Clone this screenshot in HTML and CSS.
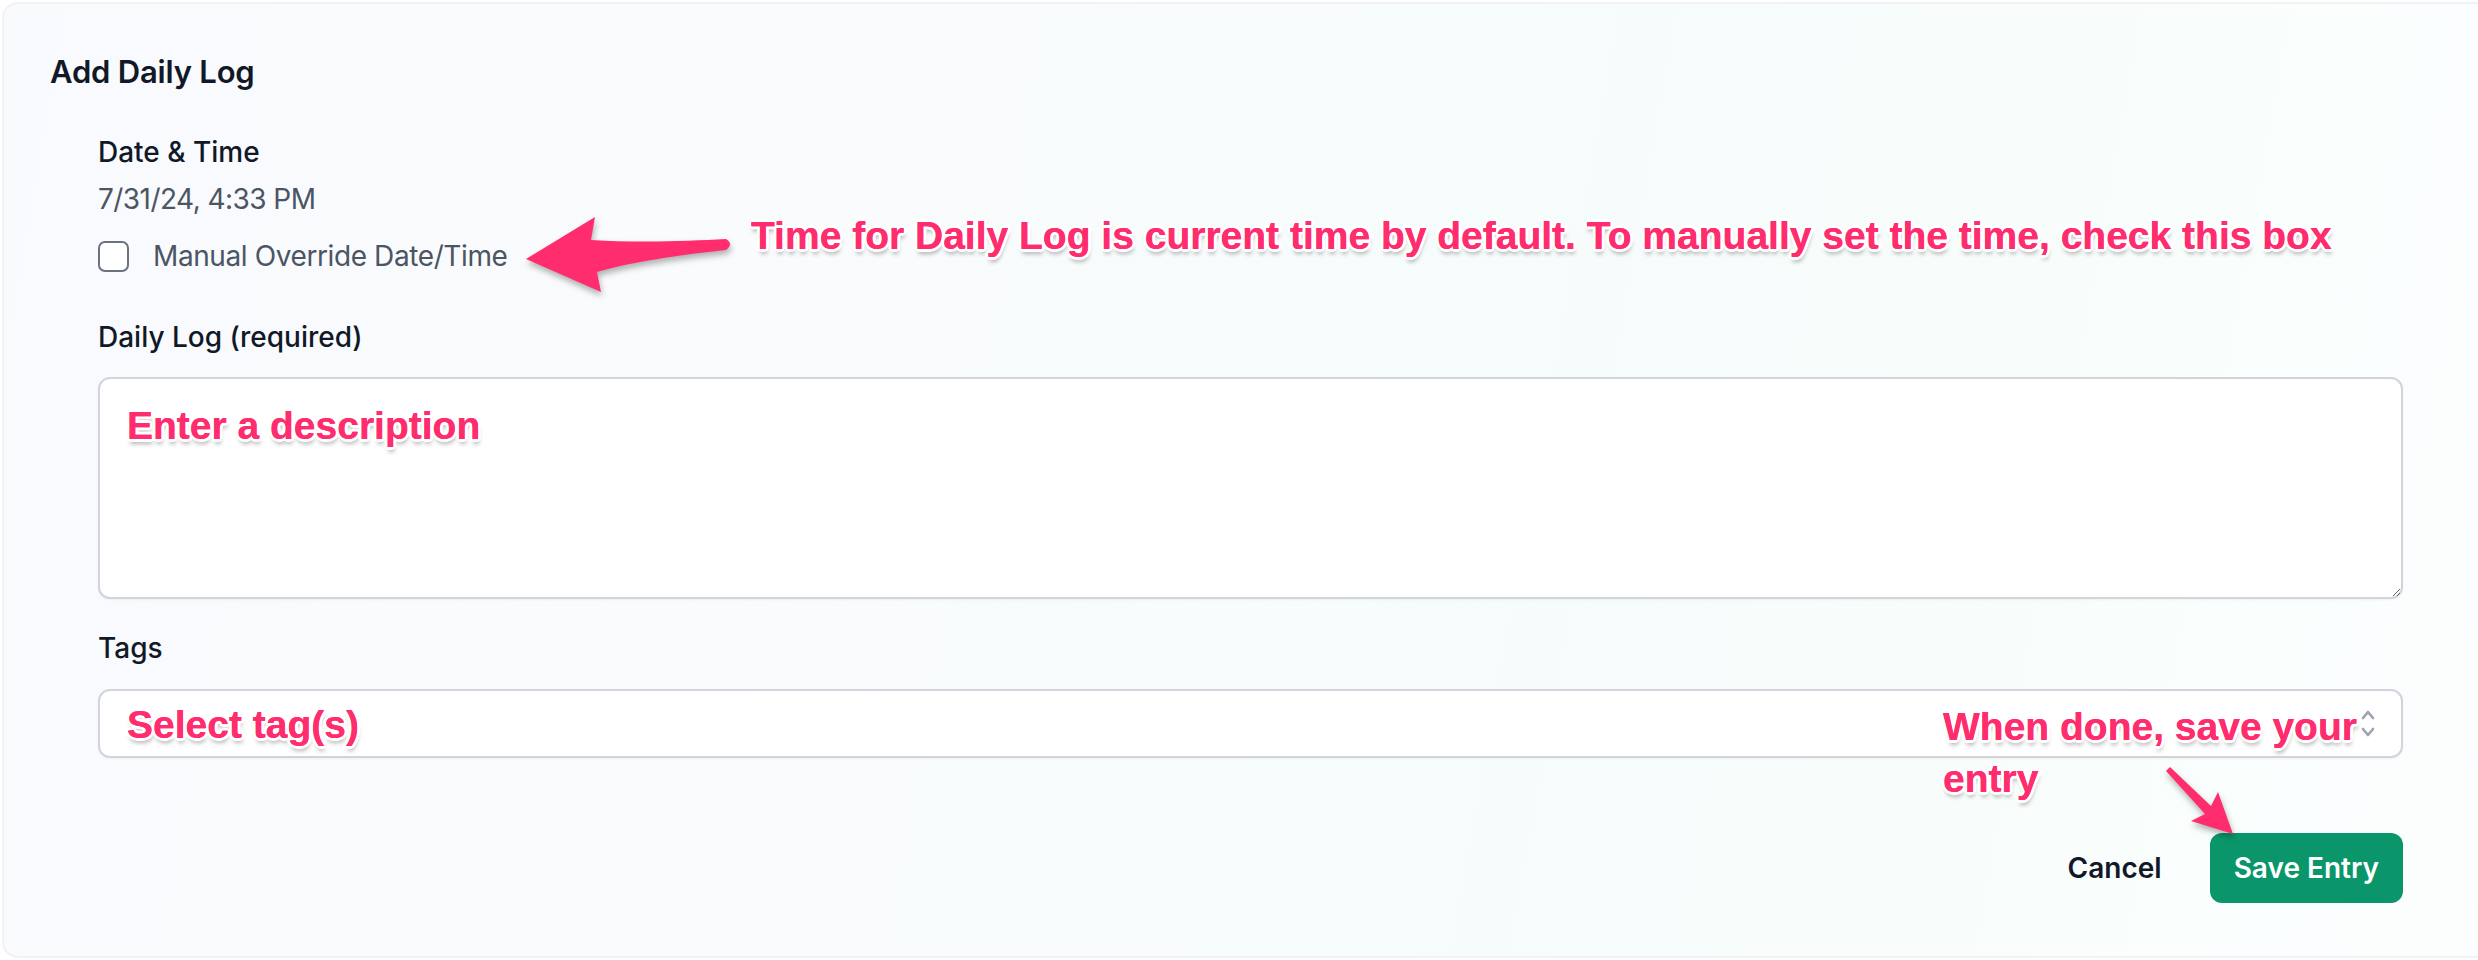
FILE: index.html
```html
<!DOCTYPE html>
<html lang="en">
<head>
<meta charset="utf-8">
<title>Add Daily Log</title>
<link rel="stylesheet" href="styles.css">
</head>
<body>
<div class="card">
  <h2 class="title">Add Daily Log</h2>
  <div class="form">
    <div class="label">Date &amp; Time</div>
    <div class="datetime">7/31/24, 4:33 PM</div>
    <label class="check-row">
      <span class="checkbox"></span>
      <span class="check-text">Manual Override Date/Time</span>
    </label>

    <div class="label label-gap">Daily Log (required)</div>
    <div class="field-wrap">
      <textarea class="textarea"></textarea>
      <div class="note note-field note-desc">Enter a description</div>
    </div>

    <div class="label label-tags">Tags</div>
    <div class="field-wrap">
      <div class="select">
        <svg class="chevron" width="16" height="30" viewBox="0 0 16 30">
          <polyline points="3,9 8,3 13,9" />
          <polyline points="3,20 8,26 13,20" />
        </svg>
      </div>
      <div class="note note-field note-tags">Select tag(s)</div>
    </div>

    <div class="actions">
      <button class="btn-cancel" type="button">Cancel</button>
      <button class="btn-save" type="button">Save Entry</button>
    </div>
  </div>
</div>

<div class="overlay">
  <svg class="arrows" width="2478" height="960" viewBox="0 0 2478 960">
    <path class="arrow" d="M526 259 L595 217 L591 240 C640 243 690 241 726 239 Q734 244 726 250 C680 255 630 262 597 272 L601 292 Z" />
    <path class="arrow" d="M2166 771 L2170 767 L2211 806 L2218 792 L2233 834 L2191 821 L2205 814 Z" />
  </svg>
  <div class="note callout callout-time">Time for Daily Log is current time by default. To manually set the time, check this box</div>
  <div class="note callout callout-save">When done, save your<br>entry</div>
</div>
</body>
</html>
```

FILE: styles.css
```css
* { box-sizing: border-box; }

body {
  margin: 0;
  background: #ffffff;
  position: relative;
  width: 2478px;
  height: 960px;
  overflow: hidden;
  font-family: Inter, "Noto Sans", sans-serif;
}

.card {
  margin: 2px 0 0 2px;
  height: 956px;
  border: 2px solid #f0f2f5;
  border-right: 0;
  border-radius: 16px 0 0 16px;
  padding: 48px 75px 0 46px;
  background: linear-gradient(100deg, #f8fafd 0%, #f9fbfd 35%, #f6fcfb 62%, #f8fdfc 80%, #fcfefe 100%);
}

.title {
  margin: 0;
  font-size: 31px;
  line-height: 40px;
  font-weight: 600;
  color: #111827;
  letter-spacing: -0.2px;
}

.form {
  margin-top: 40px;
  padding-left: 48px;
}

.label {
  font-size: 28px;
  line-height: 40px;
  font-weight: 500;
  color: #111827;
}

.datetime {
  margin-top: 7px;
  font-size: 28px;
  line-height: 40px;
  color: #4b5563;
  letter-spacing: -0.55px;
}

.check-row {
  margin-top: 17px;
  height: 40px;
  display: flex;
  align-items: center;
  gap: 24px;
}

.checkbox {
  width: 31px;
  height: 31px;
  border: 2px solid #6b7280;
  border-radius: 7px;
  background: #ffffff;
  flex: none;
}

.check-text {
  font-size: 28px;
  line-height: 40px;
  color: #4b5563;
  letter-spacing: -0.4px;
}

.label-gap { margin-top: 41px; }
.label-tags { margin-top: 29px; }

.field-wrap {
  position: relative;
  margin-top: 20px;
}

.textarea {
  display: block;
  width: 100%;
  height: 222px;
  border: 2px solid #d1d5db;
  border-radius: 12px;
  background: #ffffff;
  box-shadow: 0 1px 2px rgba(0, 0, 0, 0.05);
  resize: vertical;
  font-family: inherit;
  font-size: 28px;
  outline: none;
}

.label-tags + .field-wrap { margin-top: 21px; }

.select {
  height: 69px;
  border: 2px solid #d1d5db;
  border-radius: 12px;
  background: #ffffff;
  box-shadow: 0 1px 2px rgba(0, 0, 0, 0.05);
  display: flex;
  align-items: center;
  justify-content: flex-end;
  padding-right: 25px;
}

.chevron polyline {
  fill: none;
  stroke: #9ca3af;
  stroke-width: 2.6;
  stroke-linecap: round;
  stroke-linejoin: round;
}

.actions {
  margin-top: 75px;
  display: flex;
  justify-content: flex-end;
  align-items: center;
}

.btn-cancel {
  border: 0;
  background: transparent;
  padding: 0;
  margin-right: 48px;
  font-family: inherit;
  font-size: 28px;
  font-weight: 600;
  color: #111827;
}

.btn-save {
  height: 70px;
  border: 0;
  border-radius: 12px;
  padding: 0 24px;
  background: #0a966a;
  color: #ffffff;
  font-family: inherit;
  font-size: 28px;
  font-weight: 600;
}

/* annotation styling */
.note {
  font-family: "Liberation Sans", Arial, sans-serif;
  font-weight: 700;
  font-size: 39px;
  line-height: 39px;
  color: #ff2d6e;
  white-space: nowrap;
  text-shadow:
    0 0 0.6px #ff2d6e,
    -3px 0 0 #fff, 3px 0 0 #fff, 0 -3px 0 #fff, 0 3px 0 #fff,
    -2px -2px 0 #fff, 2px -2px 0 #fff, -2px 2px 0 #fff, 2px 2px 0 #fff,
    1px 5px 4px rgba(0, 0, 0, 0.3);
}

.note-field {
  position: absolute;
  left: 29px;
}
.note-desc { top: 29px; }
.note-tags { top: 16px; }

.overlay {
  position: absolute;
  left: 0;
  top: 0;
  width: 2478px;
  height: 960px;
  pointer-events: none;
}

.arrows {
  position: absolute;
  left: 0;
  top: 0;
  filter: drop-shadow(1px 4px 3px rgba(0, 0, 0, 0.3));
}

.arrow { fill: #ff2d6e; }

.callout { position: absolute; }

.callout-time {
  left: 751px;
  top: 216px;
}

.callout-save {
  left: 1943px;
  top: 701px;
  line-height: 52px;
}
```
